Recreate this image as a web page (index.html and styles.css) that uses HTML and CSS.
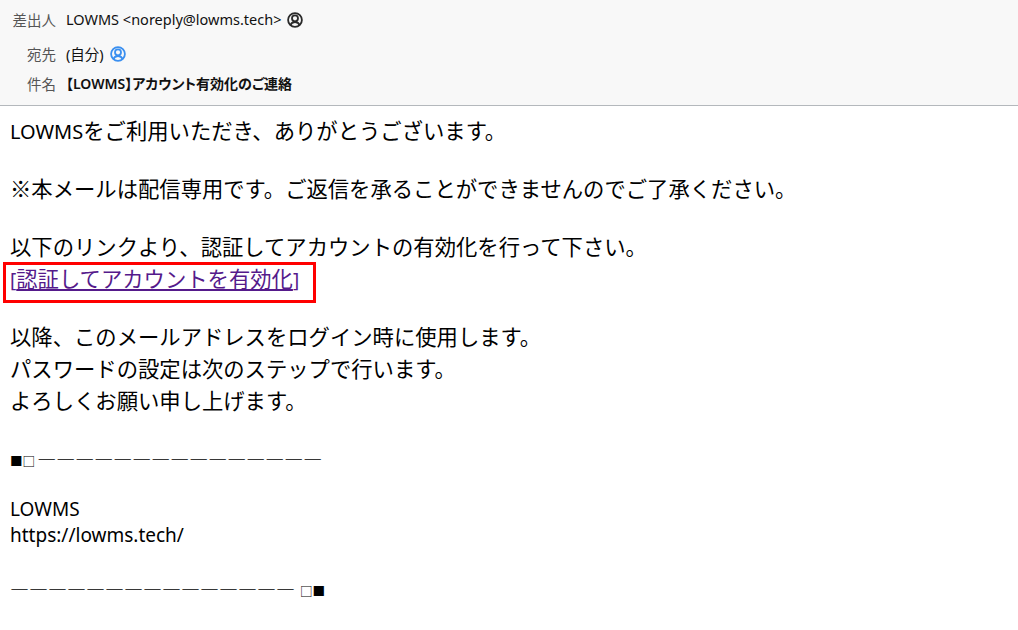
FILE: index.html
```html
<!DOCTYPE html>
<html lang="ja">
<head>
  <meta charset="UTF-8" />
  <title>【LOWMS】アカウント有効化のご連絡</title>
  <link rel="stylesheet" href="styles.css">
</head>
<body>

<header class="mail-head">
  <div class="head-row row-from">
    <span class="head-label">差出人</span>
    <span class="head-value">LOWMS &lt;noreply@lowms.tech&gt;</span>
    <svg class="person" width="16" height="16" viewBox="0 0 16 16" fill="none" stroke="#2a2a2a" stroke-width="1.8">
      <circle cx="8" cy="8" r="6.9"/>
      <circle cx="8" cy="6.3" r="3"/>
      <path d="M3.4 13.2c.8-2.400 2.500-3.200 4.600-3.200s3.800.8 4.600 3.200"/>
    </svg>
  </div>
  <div class="head-row row-to">
    <span class="head-label">宛先</span>
    <span class="head-value">(自分)</span>
    <svg class="person" width="16" height="16" viewBox="0 0 16 16" fill="none" stroke="#3a8ff0" stroke-width="1.8">
      <circle cx="8" cy="8" r="6.9"/>
      <circle cx="8" cy="6.3" r="3"/>
      <path d="M3.4 13.2c.8-2.400 2.500-3.200 4.600-3.200s3.800.8 4.600 3.200"/>
    </svg>
  </div>
  <div class="head-row row-subject">
    <span class="head-label">件名</span>
    <span class="head-value subject">【LOWMS】アカウント有効化のご連絡</span>
  </div>
</header>

<main class="mail-body">
  <div class="jp"><span class="word brand">LOWMS</span>をご利用いただき、ありがとうございます。</div>
  <div class="blank"></div>
  <div class="jp">※本メールは配信専用です。ご返信を承ることができませんのでご了承ください。</div>
  <div class="blank"></div>
  <div class="jp">以下のリンクより、認証してアカウントの有効化を行って下さい。</div>
  <div class="jp link-line">
    <a href="#"><span class="word">[</span>認証してアカウントを有効化<span class="word">]</span></a>
    <span class="red-box"></span>
  </div>
  <div class="blank"></div>
  <div class="jp">以降、このメールアドレスをログイン時に使用します。</div>
  <div class="jp">パスワードの設定は次のステップで行います。</div>
  <div class="jp">よろしくお願い申し上げます。</div>
  <div class="blank"></div>
  <div class="rule"><span class="square square-left">■□</span>―――――――――――――――</div>
  <div class="blank"></div>
  <div class="latin">LOWMS</div>
  <div class="latin">https://lowms.tech/</div>
  <div class="blank"></div>
  <div class="rule">―――――――――――――――<span class="square square-right">□■</span></div>
</main>

</body>
</html>
```

FILE: styles.css
```css
* {
  box-sizing: border-box;
}
body {
  margin: 0;
  background: #fff;
  color: #000;
  font-family: "Noto Sans", "Noto Sans CJK JP", sans-serif;
}
.mail-head {
  height: 106px;
  padding-top: 7px;
  background: #f8f8f8;
  border-bottom: 1px solid #b4b8bc;
  font-size: 14.5px;
}
.head-row {
  display: flex;
  align-items: center;
  height: 24px;
}
.row-to {
  margin-top: 10px;
}
.row-subject {
  margin-top: 6px;
}
.head-label {
  width: 66px;
  padding-right: 10px;
  text-align: right;
  color: #555;
}
.head-value {
  color: #111;
}
.subject {
  font-size: 14px;
  font-weight: 600;
  font-feature-settings: "palt";
}
.person {
  margin: 2px 0 0 6px;
}
.mail-body {
  padding: 8px 10px 0;
  font-family: "Noto Sans CJK JP", "Noto Sans", sans-serif;
  font-size: 21.33px;
}
.jp {
  height: 32px;
  line-height: 32px;
  white-space: nowrap;
}
.word {
  font-family: "Noto Sans", sans-serif;
  font-size: 19px;
}
.brand {
  font-size: 20px;
}
.latin,
.blank,
.rule {
  height: 26px;
  line-height: 26px;
  font-size: 19px;
  white-space: nowrap;
}
.latin {
  padding-top: 2px;
  font-family: "Noto Sans", sans-serif;
}
.rule {
  padding-top: 4px;
  font-variant-ligatures: none;
  font-feature-settings: "liga" 0, "clig" 0, "calt" 0, "ccmp" 0;
}
.square {
  font-size: 12.6px;
  vertical-align: 1px;
}
.square-left {
  margin-right: 2px;
}
.square-right {
  margin-left: 5px;
}
.link-line {
  position: relative;
}
.link-line a {
  color: #551a8b;
}
.red-box {
  position: absolute;
  left: -7px;
  top: 0;
  width: 313px;
  height: 41px;
  border: 3px solid #f00;
}
```
